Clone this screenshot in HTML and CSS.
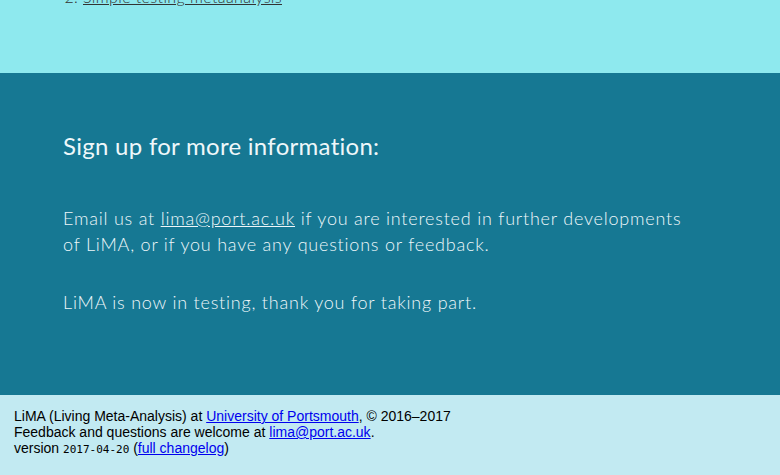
FILE: index.html
```html
<!DOCTYPE html>
<html lang="en">
<head>
<meta charset="utf-8">
<title>LiMA</title>
<link rel="stylesheet" href="styles.css">
</head>
<body>
<section class="intro">
  <div class="intro-inner">
    <h2 class="intro-title">Try LiMA</h2>
    <ol class="demo-list">
      <li><a href="#">Example meta-analysis</a></li>
      <li><a href="#">Simple testing metaanalysis</a></li>
    </ol>
  </div>
</section>
<section class="signup">
  <h2 class="signup-title">Sign up for more information:</h2>
  <p class="signup-text">Email us at <a href="#">lima@port.ac.uk</a> if you are interested in further developments of LiMA, or if you have any questions or feedback.</p>
  <p class="signup-text">LiMA is now in testing, thank you for taking part.</p>
</section>
<footer class="site-footer">
  <div>LiMA (Living Meta-Analysis) at <a href="#">University of Portsmouth</a>, © 2016–2017</div>
  <div>Feedback and questions are welcome at <a href="#">lima@port.ac.uk</a>.</div>
  <div>version <code class="version">2017-04-20</code> (<a href="#">full changelog</a>)</div>
</footer>
<script src="script.js"></script>
</body>
</html>
```
FILE: styles.css
```css
html, body {
  margin: 0;
  padding: 0;
}
body {
  font-family: "Lato", "Open Sans", sans-serif;
  font-weight: 300;
  overflow-y: scroll;
}
.intro {
  background: #8ee9ee;
  color: #333;
  min-height: 3830px;
  display: flex;
  flex-direction: column;
  justify-content: flex-end;
  padding: 0 63px 65px;
  box-sizing: border-box;
}
.intro-title {
  font-weight: 400;
  font-size: 24px;
}
.demo-list {
  margin: 0;
  padding-left: 20px;
  font-size: 16px;
  line-height: 22px;
  letter-spacing: 0.4px;
}
.demo-list a {
  color: #333;
}
.signup {
  background: #167893;
  color: #eef7fa;
  padding: 60px 63px 80px;
}
.signup-title {
  margin: 0 0 46px;
  font-size: 24px;
  line-height: 26px;
  font-weight: 400;
  letter-spacing: 0.28px;
}
.signup-text {
  margin: 0 0 32px;
  max-width: 628px;
  font-size: 18px;
  line-height: 26px;
  letter-spacing: 0.78px;
}
.signup-text:last-child {
  margin-bottom: 0;
}
.signup-text a {
  color: #eef7fa;
}
.site-footer {
  background: #c2eaf2;
  color: #000;
  font-family: "Liberation Sans", Arial, sans-serif;
  font-weight: 400;
  font-size: 14px;
  line-height: 16px;
  padding: 13px 14px 17px;
}
.site-footer a {
  color: #0000ee;
}
.version {
  font-family: "DejaVu Sans Mono", monospace;
  font-size: 11px;
}
```
FILE: script.js
```js
window.scrollTo(0, document.documentElement.scrollHeight);
window.addEventListener('load', function () {
  window.scrollTo(0, document.documentElement.scrollHeight);
});
```
